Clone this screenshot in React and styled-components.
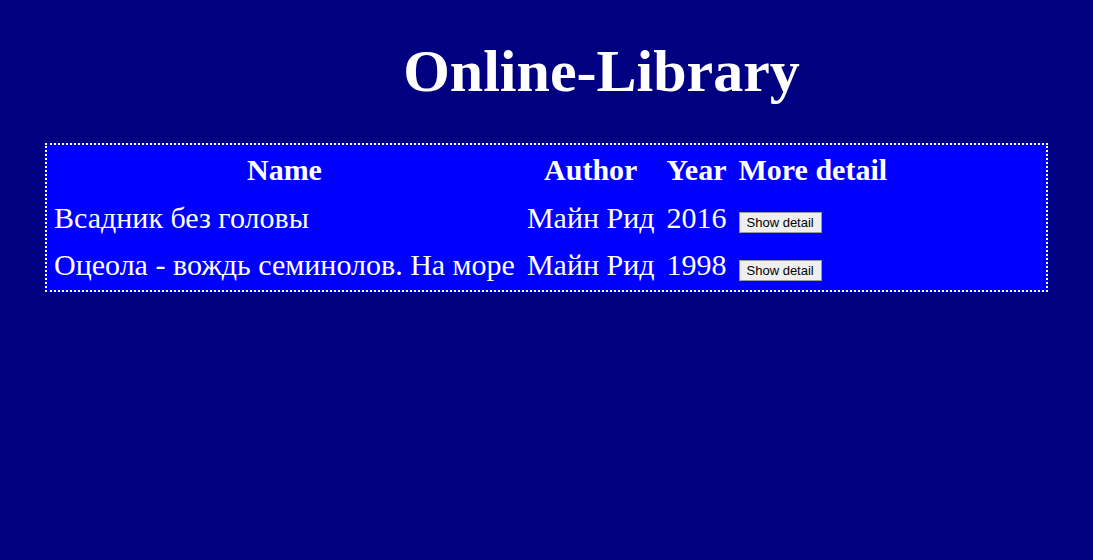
import styled, { createGlobalStyle } from "styled-components";

const GlobalStyle = createGlobalStyle`
  body {
    margin: 8px;
    background: #000080;
    color: #fff;
    font-family: "Liberation Serif", "Times New Roman", serif;
  }
`;

const Title = styled.h1`
  margin: 29px 0 37px;
  padding-left: 110px;
  text-align: center;
  font-size: 60px;
  font-weight: bold;
`;

const Frame = styled.div`
  width: 999px;
  margin: 0 auto;
  border: 2px dotted #fff;
  background: #0000ff;
`;

const Table = styled.table`
  border-spacing: 2px;
  font-size: 30px;
`;

const Head = styled.th`
  padding: 6px 5px 5.5px;
  text-align: center;
  font-weight: bold;
`;

const Cell = styled.td`
  padding: 6px 5px 5.5px;
  text-align: ${(props) => props.align || "left"};
  white-space: nowrap;
`;

const Button = styled.button`
  font-family: "Liberation Sans", Arial, sans-serif;
  font-size: 13px;
  color: #000;
  background: #efefef;
  border: 1px solid #9a9a9a;
  padding: 2px 7px 2px;
  margin-top: 4px;
  vertical-align: middle;
`;

const books = [
  { name: "Всадник без головы", author: "Майн Рид", year: 2016 },
  { name: "Оцеола - вождь семинолов. На море", author: "Майн Рид", year: 1998 },
];

const App = () => {
  return (
    <>
      <GlobalStyle />
      <Title>Online-Library</Title>
      <Frame>
        <Table>
          <thead>
            <tr>
              <Head>Name</Head>
              <Head>Author</Head>
              <Head>Year</Head>
              <Head>More detail</Head>
            </tr>
          </thead>
          <tbody>
            {books.map((book) => (
              <tr key={book.name}>
                <Cell>{book.name}</Cell>
                <Cell align="right">{book.author}</Cell>
                <Cell>{book.year}</Cell>
                <Cell>
                  <Button>Show detail</Button>
                </Cell>
              </tr>
            ))}
          </tbody>
        </Table>
      </Frame>
    </>
  );
};

export default App;
